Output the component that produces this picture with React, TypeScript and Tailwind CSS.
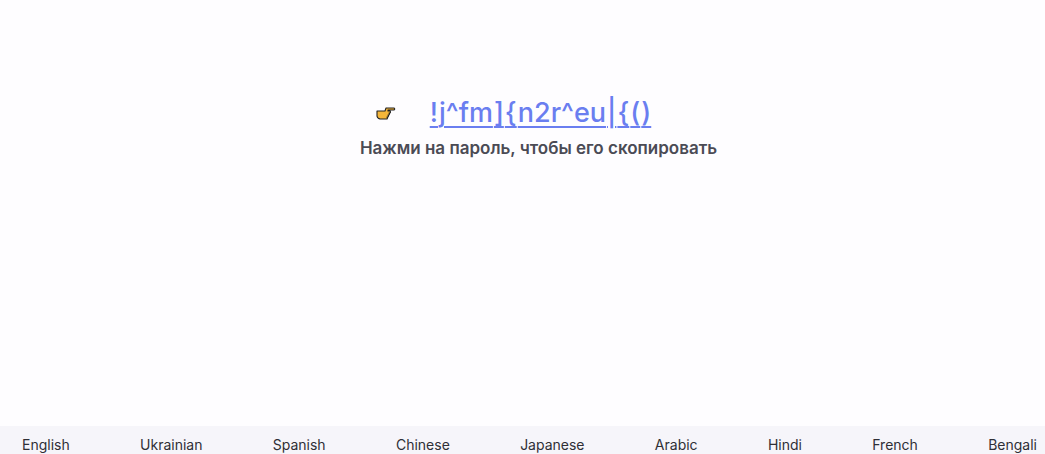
const parts = ["!", "j^fm", "]", "{", "n2r^eu", "|", "{", "(", ")"];
const langs = ["English", "Ukrainian", "Spanish", "Chinese", "Japanese", "Arabic", "Hindi", "French", "Bengali"];

const Hand = () => (
  <svg width="20" height="14" viewBox="0 0 20 14">
    <path
      d="M1 5 L9 5 L10 2 L18 2 Q19.5 3 18 4 L12 4 L12 5 L14 5 Q15 6 14 7 L13 7 Q14 8 13 9 L12 9 Q13 10 12 11 L11 11 Q12 12 11 13 L4 13 Q1 12 1 10 Z"
      fill="#f5b63a"
      stroke="#222"
      strokeWidth="1.1"
      strokeLinejoin="round"
    />
  </svg>
);

export default function App() {
  return (
    <div className="w-[1045px] h-[454px] bg-[#fefdff] flex flex-col" style={{ fontFamily: "Inter, 'Noto Sans', sans-serif" }}>
      <div className="flex-1 flex flex-col items-center pt-[93px]">
        <div className="flex items-center gap-[34px] mr-[18px]">
          <Hand />
          <div className="flex text-[27px] leading-[40px] font-medium text-[#6a7ef0] gap-[1px]">
            {parts.map((p, i) => (
              <span key={i} className="underline underline-offset-[4px] decoration-[2px] cursor-pointer">
                {p}
              </span>
            ))}
          </div>
        </div>
        <p className="mt-[3px] ml-[32px] text-[17px] font-semibold text-[#4b4b55]">
          Нажми на пароль, чтобы его скопировать
        </p>
      </div>
      <div className="h-[28px] bg-[#f6f5fa] flex items-center justify-between pl-[22px] pr-[8px] text-[14px] text-[#2f2f36]">
        {langs.map((l) => (
          <span key={l} className="pt-[8px]">{l}</span>
        ))}
      </div>
    </div>
  );
}
